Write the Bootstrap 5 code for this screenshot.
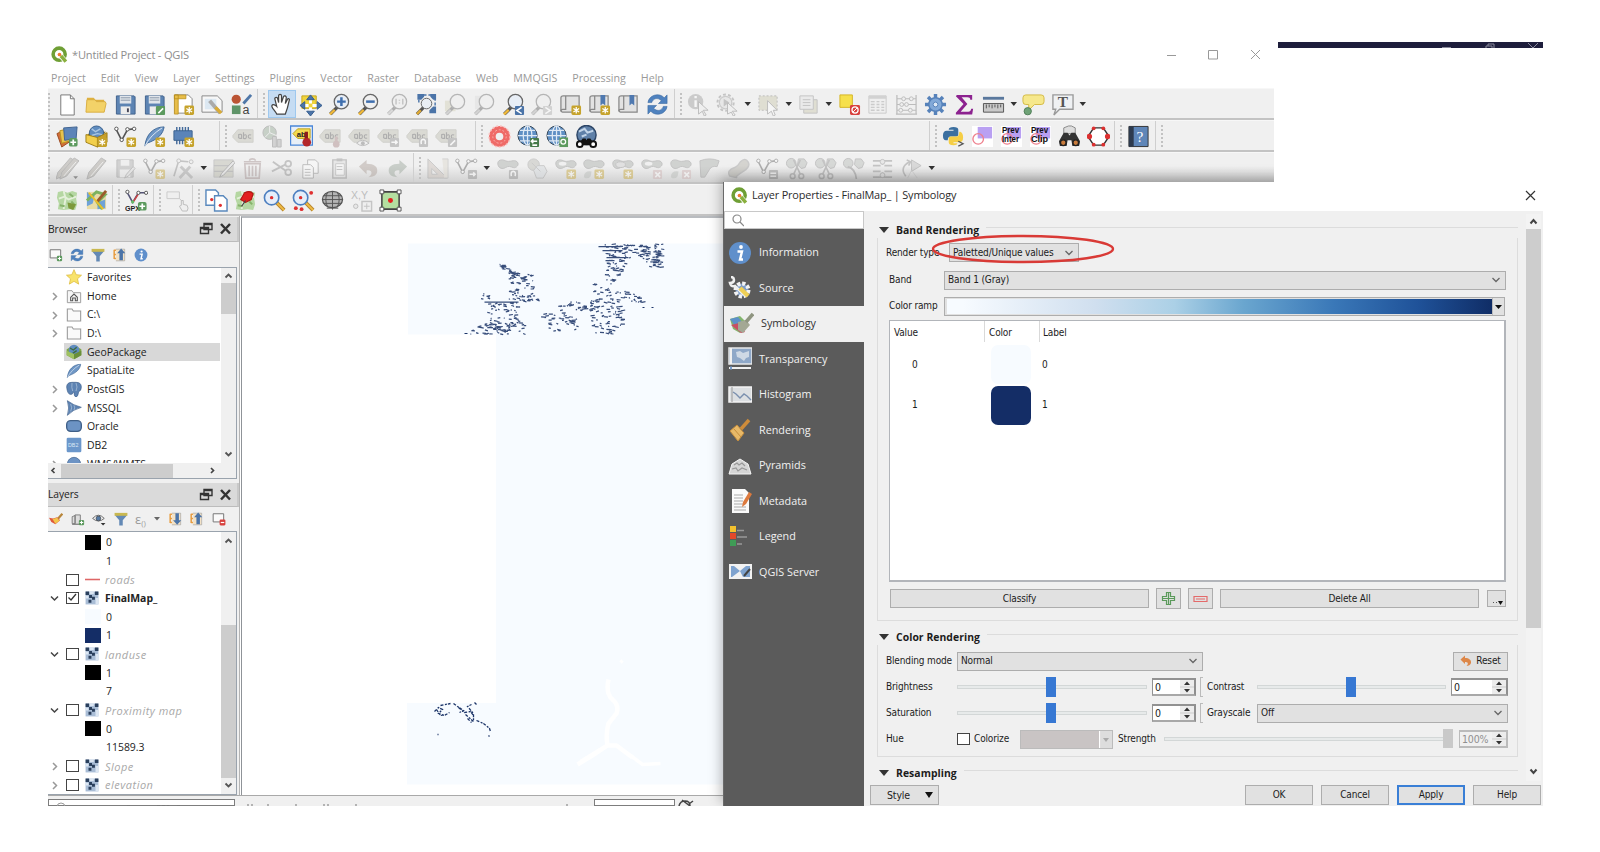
<!DOCTYPE html>
<html lang="en">
<head>
<meta charset="utf-8">
<title>QGIS - Layer Properties</title>
<link rel="stylesheet" href="https://cdn.jsdelivr.net/npm/bootstrap@5.3.0/dist/css/bootstrap.min.css">
<style>
body{background:#fff;font-family:"Open Sans","Noto Sans",sans-serif;font-size:11px;line-height:1;color:#222;overflow:hidden}
svg{display:block;flex:none}
.desk{width:1495px;height:764px;margin:42px 0 0 48px}
.mainwin{width:1226px;height:764px}
.wtitle{height:26px;color:#8e8e8e;padding:0 2px 1px 3px;font-size:11.1px;letter-spacing:-.2px}
.wmenu{height:21px;color:#9a9a9a;padding:2px 0 0 3px;gap:14.9px;font-size:10.7px}
.darkstrip{left:1230px;top:0;width:265px;height:6px;background:#1e1e3c}
.tbar{height:32px;background:#f0f0f0;border-top:1px solid #f7f7f7;border-bottom:2px solid #c3c3c3}
.tbar.fade-end{background:linear-gradient(#f0f0f0 45%,#d2d2d2)}
.tbar:last-child{background:#f0f0f0}
.tgroup{height:29px;border-right:1px solid #cfcfcf;flex:none;padding:1px 0 0 9.5px;position:relative}
.tgroup:last-child{border-right:0}
.tgroup:first-child{padding-left:5.5px}
.tgroup::before{content:"";position:absolute;left:5px;top:4px;bottom:3px;border-left:2px dotted #c2c2c2}
.tgroup:first-child::before{left:0}
.cell{width:28.9px;height:28px;flex:none}
.cell.on{background:#c5dcf3;border:1px solid #9ec8ee}
.arr{width:11.5px;flex:none}
.off{opacity:.42}
.dock{width:192px;background:#f0f0f0;border-right:1px solid #b4b4b4;padding-top:1px}
.dtitle{height:25px;background:#dadada;border-bottom:1px solid #bcbcbc;border-right:2px solid #c9c9c9;padding-right:4px;font-size:10.3px;letter-spacing:-.1px}
.dtools{height:25px}
.tree{background:#fff;border:1px solid #9aa3ad;border-left:0;margin-right:2px}
.trow{height:18.65px;font-size:10.45px;white-space:nowrap}
.trow.hl .tbody{background:#d8d8d8}
.tbody{height:18.65px;width:156px}
.tw{width:16px;flex:none}
.vsb{width:15px;background:#f0f0f0;flex:none}
.thumb{background:#cdcdcd}
.cb{width:13px;height:12px;border:1.4px solid #444;background:#fff;flex:none}
.sw{width:16px;height:15px;flex:none}
.ghost{color:#a8a8a8;font-style:italic;font-size:11px;letter-spacing:.5px}
.canvasbox{background:#fff;border-top:2px solid #b9bcc0;border-left:1px solid #8f9398;margin-left:1px}
.statusb{height:11px;flex:none;background:#f0f0f0;border-top:1px solid #a9a9a9;overflow:hidden}
.dlg{left:676px;top:140px;width:819px;height:624px;background:#f0f0f0;box-shadow:-1px 0 0 #6a6a6a,-3px -4px 12px rgba(0,0,0,.28);clip-path:polygon(-20px -20px,550px -20px,550px 0,819px 0,819px 624px,-20px 624px)}
.dlgtitle{height:29px;background:#fff;padding:0 6px 8px 7px;padding-bottom:2px;font-size:10.9px;color:#2b2b2b;letter-spacing:-.16px}
.side{width:140px;background:#5b5b5b}
.sfind{height:18px;background:#fff;border:1px solid #c8c8c8;padding-left:7px;margin-bottom:6px}
.sitem{height:35.5px;color:#f1f1f1;gap:7px;padding-left:4px;font-size:10.8px}
.sitem.sel{background:#f0f0f0;color:#333;padding-left:6px}
.cont{font-family:"DejaVu Sans Condensed","DejaVu Sans",sans-serif;font-size:10px;letter-spacing:-.15px;color:#1c1c1c}
.gbox{border:1px solid #dcdcdc;border-top:0;width:641px;margin-left:13px}
.ghead{height:17px;font:700 10.4px "Open Sans","Noto Sans",sans-serif;width:642px;letter-spacing:.05px}
.ghead::after{content:"";flex:1;height:1px;background:#dcdcdc;margin:0 0 4px 7px}
.ghead svg{margin:0 7px 0 3px}
.fld{height:19px;background:#e1e1e1;border:1px solid #adadad;padding:0 4px 0 3px;flex:none}
.pbtn{height:19px;background:#e1e1e1;border:1px solid #adadad;flex:none}
.cramp{background:linear-gradient(90deg,#f7fbff,#d0dfef 25%,#abd0e6 40%,#6aa6cf 53%,#3a78b8 70%,#1f5299 86%,#102d66);height:15px;width:529px}
.ptable{width:617px;height:262px;background:#fff;border:2px solid #b2b5ba;border-width:1px 2px 2px 1px;margin-left:11px}
.thd{height:23px}
.thd>div{border-right:1px solid #d9d9d9;height:21px;padding-left:4px}
.thd>div:last-child{border:0}
.swatch{width:40px;height:39px;border-radius:7px}
.frow{height:26px;padding-left:8px}
.lab{flex:none;white-space:nowrap}
.sl{height:20px;flex:none;padding:8px 0}
.sl>i{display:block;height:4px;border:1px solid #d3d7d7;background:#e7eaea}
.sl>b{position:absolute;top:0;width:10px;height:20px;background:#3778d3}
.spin{height:18px;background:#fff;border:1px solid #8f8f8f;border-width:2px 2px 2px 1px;border-color:#929292 #8f8f8f #a8a8a8 #929292;flex:none;padding-left:2px;font-size:10.5px}
.spin>span:last-child{width:14px;height:14px;background:#ececec}
.brk{width:3px;height:20px;border:1px solid #bbb;border-right:0;flex:none}
.csb{left:662px;top:3px;width:15px;height:567px;background:#f3f3f3}
.mark-ring{left:67px;top:22px}
.dis{color:#8f8f8f}
</style>
</head>
<body>
<div class="desk position-relative overflow-hidden">
 <div class="mainwin d-flex flex-column">
  <div class="wtitle d-flex align-items-center">
   <svg width="17" height="17" viewBox="0 0 24 24" data-i="q"></svg><span class="ms-1 flex-grow-1">*Untitled Project - QGIS</span>
   <svg width="110" height="12" viewBox="0 0 110 12" fill="none" stroke="#999" stroke-width="1"><path d="M5 7.5h9M46.500 2.500h9v8.500h-9zM89 2l9 9M98 2l-9 9"/></svg>
  </div>
  <div class="wmenu d-flex align-items-center" id="menu"></div>
  <div id="bars"></div>
  <div class="d-flex flex-grow-1">
   <div class="dock d-flex flex-column">
    <div class="dtitle d-flex align-items-center justify-content-between"><span>Browser</span><svg width="34" height="14" viewBox="0 0 34 14" data-i="dockb"></svg></div>
    <div class="dtools d-flex align-items-center ps-1" style="gap:7.200px;margin-left:-3px"><svg width="14" height="14" viewBox="0 0 24 24" data-i="addbox"></svg><svg width="14" height="14" viewBox="0 0 24 24" data-i="refresh"></svg><svg width="14" height="14" viewBox="0 0 24 24" data-i="filter"></svg><svg width="14" height="14" viewBox="0 0 24 24" data-i="collapse"></svg><svg width="14" height="14" viewBox="0 0 24 24" data-i="info"></svg></div>
    <div class="tree" style="height:212px">
     <div class="d-flex" style="height:195px">
      <div class="flex-grow-1 overflow-hidden" id="browser"></div>
      <div class="vsb"><svg width="15" height="15" viewBox="0 0 15 15" fill="none" stroke="#555" stroke-width="1.800"><path d="M4.500 9.500l3-3 3 3"/></svg><div class="thumb" style="height:31px"></div><svg width="15" height="15" viewBox="0 0 15 15" fill="none" stroke="#555" stroke-width="1.800" style="margin-top:133px"><path d="M4.500 5.500l3 3 3-3"/></svg></div>
     </div>
     <div class="d-flex align-items-center" style="height:15px;background:#f0f0f0"><svg width="13" height="15" viewBox="0 0 13 15" fill="none" stroke="#444" stroke-width="1.700"><path d="M6.500 5l-2.500 2.500 2.500 2.500"/></svg><div class="thumb" style="width:112px;height:14px"></div><svg class="ms-auto" width="31" height="15" viewBox="0 0 31 15" fill="none" stroke="#444" stroke-width="1.700"><path d="M6 5l2.500 2.500-2.500 2.500"/></svg></div>
    </div>
    <div class="dtitle d-flex align-items-center justify-content-between" style="margin-top:4px;height:24px"><span>Layers</span><svg width="34" height="14" viewBox="0 0 34 14" data-i="dockb"></svg></div>
    <div class="dtools d-flex align-items-center" style="gap:7.500px;padding-left:1px;height:24px"><svg width="14" height="14" viewBox="0 0 24 24" data-i="broom"></svg><svg width="14" height="14" viewBox="0 0 24 24" data-i="addgrp"></svg><svg width="14" height="14" viewBox="0 0 24 24" data-i="eye"></svg><svg width="14" height="14" viewBox="0 0 24 24" data-i="filter"></svg><span class="d-flex align-items-center" style="gap:1px"><span class="off" style="font-size:13px;width:17px">ε<sub style="font-size:8px">()</sub></span><svg width="8" height="6" viewBox="0 0 8 6"><path d="M1 1h6l-3 3.500z" fill="#666"/></svg></span><svg width="14" height="14" viewBox="0 0 24 24" data-i="expand"></svg><svg width="14" height="14" viewBox="0 0 24 24" data-i="collapse"></svg><svg width="14" height="14" viewBox="0 0 24 24" data-i="rmbox"></svg></div>
    <div class="tree d-flex flex-grow-1">
      <div class="flex-grow-1 overflow-hidden" id="layers" style="padding-top:1px"></div>
      <div class="vsb"><svg width="15" height="17" viewBox="0 0 15 15" fill="none" stroke="#555" stroke-width="1.800"><path d="M4.500 9.500l3-3 3 3"/></svg><div class="thumb" style="height:153px;margin-top:76px"></div><svg width="15" height="15" viewBox="0 0 15 15" fill="none" stroke="#555" stroke-width="1.800"><path d="M4.500 5.500l3 3 3-3"/></svg></div>
    </div>
   </div>
   <div class="canvasbox flex-grow-1"><svg id="map" width="483" height="573" viewBox="241.500 219.500 483 573"></svg></div>
  </div>
  <div class="statusb d-flex">
   <div style="width:187px;margin-top:3px;background:#fff;border:1px solid #7d7d7d"><svg width="187" height="8"><circle cx="12" cy="7" r="4" fill="none" stroke="#999"/><path d="M26 6.500h12M46 6.500h8M62 6.500h3M78 6h5M90 6.500h9M108 5.500h12M128 6h4" stroke="#777" stroke-width="1" stroke-dasharray="3 2"/></svg></div>
   <svg width="359" height="10"><path d="M12 9h8M32 9h4M60 9h3M88 9h8M120 9h3M331 9h2" stroke="#777" stroke-dasharray="2 2"/></svg>
   <div style="width:81px;margin-top:3px;background:#fff;border:1px solid #7d7d7d"></div>
   <svg width="50" height="10"><path d="M4 10q1-5 6-5t5 5M7 4l8 6M14 8l4-3" fill="none" stroke="#444" stroke-width="1.500"/></svg>
  </div>
 </div>
 <div class="darkstrip position-absolute"><svg width="265" height="6" fill="none" stroke="#8a8a9c"><path d="M164 5.500h9M208 6v-2h6v2M210 4v-2h6v4M250 1l5 5 5-5"/></svg></div>

 <div class="dlg position-absolute d-flex flex-column">
  <div class="dlgtitle d-flex align-items-center"><svg width="17" height="17" viewBox="0 0 24 24" data-i="q"></svg><span class="flex-grow-1" style="margin-left:4px">Layer Properties - FinalMap_ | Symbology</span><svg width="12" height="12" viewBox="0 0 12 12"><path d="M1 1l9 9M10 1l-9 9" stroke="#333" stroke-width="1.200"/></svg></div>
  <div class="d-flex flex-grow-1">
   <div class="side"><div class="sfind d-flex align-items-center"><svg width="12" height="13" viewBox="0 0 12 13" fill="none" stroke="#888" stroke-width="1.200"><circle cx="5" cy="5" r="4"/><path d="M8 8l4 4"/></svg></div><div id="side"></div></div>
   <div class="cont position-relative flex-grow-1">
    <div style="height:570px;overflow:hidden;padding-top:10px">
     <div class="ghead d-flex align-items-center" style="margin-left:12px"><svg width="10" height="8" viewBox="0 0 10 8"><path d="M0 1h10l-5 6z" fill="#333"/></svg>Band Rendering</div>
     <div class="gbox" style="height:383px">
      <div class="frow d-flex align-items-center" style="height:29px"><span class="lab" style="width:63px">Render type</span><div class="fld d-flex align-items-center justify-content-between" style="width:130px">Paletted/Unique values<svg width="10" height="8" viewBox="0 0 10 8" data-i="chev"></svg></div></div>
      <div class="frow d-flex align-items-center" style="padding-left:11px"><span class="lab" style="width:55px">Band</span><div class="fld d-flex align-items-center justify-content-between" style="width:562px">Band 1 (Gray)<svg width="10" height="8" viewBox="0 0 10 8" data-i="chev"></svg></div></div>
      <div class="frow d-flex align-items-center" style="padding-left:11px"><span class="lab" style="width:55px">Color ramp</span><div class="fld d-flex align-items-center" style="width:561px;padding:0 0 0 2px"><span style="width:16px;height:15px;background:#f7fbff"></span><div class="cramp"></div><svg class="ms-auto" width="12" height="17"><path d="M.5 0v17" stroke="#bbb"/><path d="M3 7h7l-3.500 4z" fill="#111"/></svg></div></div>
      <div class="ptable" style="margin-top:1px">
       <div class="thd d-flex"><div style="width:95px;padding-top:7px">Value</div><div style="width:55px;padding-top:7px">Color</div><div style="padding:7px 3px">Label</div></div>
       <div class="d-flex align-items-center" style="height:41px"><span style="width:101px;padding-left:22px">0</span><span class="swatch" style="background:#f7fbff"></span><span style="margin-left:11px">0</span></div>
       <div class="d-flex align-items-center" style="height:40px"><span style="width:101px;padding-left:22px">1</span><span class="swatch" style="background:#142d66"></span><span style="margin-left:11px">1</span></div>
      </div>
      <div class="d-flex align-items-center" style="margin:6px 0 0 12px;gap:7px"><div class="pbtn d-flex align-items-center justify-content-center" style="width:259px">Classify</div><div class="pbtn d-flex align-items-center justify-content-center" style="width:25px;height:21px"><svg width="15" height="15" viewBox="0 0 15 15" fill="none" stroke="#5b9a5b" stroke-width="1.200"><path d="M5.500 1.500h4v4h4v4h-4v4h-4v-4h-4v-4h4zM7.500 2v11M2 7.500h11"/></svg></div><div class="pbtn d-flex align-items-center justify-content-center" style="width:25px;height:21px"><svg width="15" height="8" viewBox="0 0 15 8" fill="none" stroke="#e46a6a" stroke-width="1.200"><path d="M1 1.500h13v5h-13zM3 4h9"/></svg></div><div class="pbtn d-flex align-items-center justify-content-center" style="width:259px">Delete All</div><div class="pbtn" style="width:19px;height:17px;margin-left:1px"><svg width="17" height="15"><path d="M5 11.500h1M8 11.500h1" stroke="#555"/><path d="M10 10h5l-2.500 4z" fill="#111"/></svg></div></div>
     </div>
     <div class="ghead d-flex align-items-center" style="margin:7px 0 0 12px"><svg width="10" height="8" viewBox="0 0 10 8"><path d="M0 1h10l-5 6z" fill="#333"/></svg>Color Rendering</div>
     <div class="gbox" style="height:112px;padding-top:3px">
      <div class="frow d-flex align-items-center"><span class="lab" style="width:71px">Blending mode</span><div class="fld d-flex align-items-center justify-content-between" style="width:246px">Normal<svg width="10" height="8" viewBox="0 0 10 8" data-i="chev"></svg></div><div class="pbtn d-flex align-items-center justify-content-center" style="width:55px;margin-left:250px;gap:4px"><svg width="12" height="12" viewBox="0 0 24 24"><path d="M1 9l9-8v5c8 0 13 4 12 10-1 4-5 6-9 6 3-2 5-9-3-8v4z" fill="#dd8748"/></svg>Reset</div></div>
      <div class="frow d-flex align-items-center"><span class="lab" style="width:71px">Brightness</span><div class="sl position-relative" style="width:190px"><i></i><b style="left:89px"></b></div><div class="spin d-flex align-items-center justify-content-between" style="width:44px;margin-left:5px">0<span data-spin></span></div><div class="brk" style="margin-left:4px"></div><span class="lab" style="margin-left:4px;width:50px">Contrast</span><div class="sl position-relative" style="width:189px"><i></i><b style="left:89px"></b></div><div class="spin d-flex align-items-center justify-content-between" style="width:57px;margin-left:5px">0<span data-spin></span></div></div>
      <div class="frow d-flex align-items-center"><span class="lab" style="width:71px">Saturation</span><div class="sl position-relative" style="width:190px"><i></i><b style="left:89px"></b></div><div class="spin d-flex align-items-center justify-content-between" style="width:44px;margin-left:5px">0<span data-spin></span></div><div class="brk" style="margin-left:4px"></div><span class="lab" style="margin-left:4px;width:50px">Grayscale</span><div class="fld d-flex align-items-center justify-content-between" style="width:251px">Off<svg width="10" height="8" viewBox="0 0 10 8" data-i="chev"></svg></div></div>
      <div class="frow d-flex align-items-center"><span class="lab" style="width:71px">Hue</span><span class="cb"></span><span class="lab" style="margin-left:4px;width:46px">Colorize</span><div class="fld d-flex justify-content-end p-0" style="width:93px;background:#c9c4c4;border-color:#bbb">
      <svg width="13" height="17"><path d="M0 0h1.500v17h-1.500z" fill="#fff"/><path d="M1.500 0h12v17h-12z" fill="#ddd"/><path d="M4 7h6l-3 4z" fill="#aaa"/></svg></div><span class="lab" style="margin-left:5px;width:46px">Strength</span><div class="sl position-relative" style="width:289px"><i></i><b style="left:279px;height:19px;background:#c9c9c9"></b></div><div class="spin dis d-flex align-items-center justify-content-between" style="width:49px;margin-left:6px;background:#f0f0f0;border-color:#bbb">100%<span data-spin></span></div></div>
     </div>
     <div class="ghead d-flex align-items-center" style="margin:7px 0 0 12px"><svg width="10" height="8" viewBox="0 0 10 8"><path d="M0 1h10l-5 6z" fill="#333"/></svg>Resampling</div>
     <div class="gbox" style="height:20px"></div>
    </div>
    <div class="d-flex" style="padding:4px 2px 0 6px;gap:8px"><div class="pbtn d-flex align-items-center justify-content-between px-3" style="width:69px;height:20px;font-size:10.500px;padding-right:5px!important">Style<svg width="8" height="6" viewBox="0 0 8 6"><path d="M0 0h8l-4 6z" fill="#111"/></svg></div><div class="pbtn ms-auto d-flex align-items-center justify-content-center" style="width:68px;height:20px">OK</div><div class="pbtn d-flex align-items-center justify-content-center" style="width:68px;height:20px">Cancel</div><div class="pbtn d-flex align-items-center justify-content-center" style="width:68px;height:20px;border:2px solid #3a7fd6">Apply</div><div class="pbtn d-flex align-items-center justify-content-center" style="width:68px;height:20px">Help</div></div>
    <div class="csb position-absolute"><svg width="15" height="15" viewBox="0 0 15 15" fill="none" stroke="#444" stroke-width="2"><path d="M4.500 9.500l3-3.500 3 3.500"/></svg><div class="thumb" style="height:399px"></div><svg width="15" height="15" viewBox="0 0 15 15" fill="none" stroke="#444" stroke-width="2" style="margin-top:136px"><path d="M4.500 5.500l3 3.500 3-3.500"/></svg></div>
    <svg class="mark-ring position-absolute" width="186" height="34" fill="none"><ellipse cx="92" cy="16" rx="90" ry="13" stroke="#d93a36" stroke-width="2.400"/></svg>
   </div>
  </div>
 </div>
</div>
<script src="https://cdn.jsdelivr.net/npm/bootstrap@5.3.0/dist/js/bootstrap.bundle.min.js"></script>
<script>
// Small building blocks shared by the icons; every icon is drawn on a 24 x 24 grid.
const star='<rect x="13" y="13" width="10" height="10" rx="1.500" fill="#c6a32c"/><path d="M18 14.500v7M15 16.200l6 3.600M21 16.200l-6 3.600" stroke="#fff" stroke-width="1.300"/>';
const plus='<rect x="13.500" y="13.500" width="9" height="9" rx="2" fill="#5c9a5e"/><path d="M18 15v6M15 18h6" stroke="#fff" stroke-width="1.800"/>';
const badge=(c,p)=>`<rect x="13.500" y="13.500" width="9.500" height="9.500" rx="1" fill="${c}"/><path d="${p}" stroke="#fff" stroke-width="1.600" fill="none"/>`;
const lens=(f,h,x='')=>`<path d="M9.500 15l-7 7" stroke="#555" stroke-width="3.600"/><path d="M7 17.500l-5 4.800" stroke="${h}" stroke-width="2.500"/><circle cx="14" cy="9" r="7.500" fill="${f}" stroke="#666" stroke-width="1.300"/>${x}`;
const tag='<path d="M1 11l5-6h16v13h-16l-5-5z" fill="#bdbcae" stroke="#a5a59b"/><path d="M7 10q3-1 3 1v3q-4 0-3-2zM12 7.500v6.500q3 1 3-2t-3-1M20 10.500q-3-1-3 1.500t3 1.500" fill="none" stroke="#555" stroke-width="1.200"/>';
const vee='<path d="M2 4l6 12 6-11 6-1" fill="none" stroke="#555" stroke-width="1.700"/><circle cx="2.500" cy="4" r="1.800" fill="#fff" stroke="#555"/><circle cx="8" cy="15.500" r="1.800" fill="#fff" stroke="#555"/><circle cx="14" cy="4.500" r="1.800" fill="#fff" stroke="#555"/><circle cx="21" cy="4" r="1.800" fill="#fff" stroke="#555"/>';
const blob='<path d="M2 8c-1-5 4-6 8-4s9-2 12 1-1 7-4 6-5-2-8 0-7 1-8-3z" fill="#a6aaa6" stroke="#888"/>';
const globe='<circle cx="11" cy="11" r="10" fill="#5f8fc4" stroke="#345"/><ellipse cx="11" cy="11" rx="4.500" ry="10" fill="none" stroke="#dfe9f5" stroke-width="1.300"/><path d="M1 11h20M3 5.500h16M3 16.500h16M11 1v20" stroke="#dfe9f5" stroke-width="1.300"/>';
const page='<path d="M5 2h10l4 4v17h-14z" fill="#fff" stroke="#777"/><path d="M15 2v4h4" fill="none" stroke="#777"/>';
const floppy='<path d="M2.500 3h18.500l1 1v18h-19.500z" fill="#5d84b3" stroke="#41618c"/><path d="M6 3h12v8h-12z" fill="#dfe4ea"/><path d="M7 5h10M7 7.500h10" stroke="#8a97a8"/><path d="M7 14h10v8h-10z" fill="#ececec"/><path d="M13.500 16h2v4h-2z" fill="#445"/>';
const book='<path d="M5 3h16v17h-16q-3 0-3-2v-13q0-2 2.500-2z" fill="#e2e2e2" stroke="#888" stroke-width="1.300"/><path d="M7 3v14h-3q-2 0-2 2" fill="none" stroke="#888" stroke-width="1.300"/>';
const pencil='<path d="M17 1l5 3-13 16-7 3 2-7z" fill="#a09c94" stroke="#777"/><path d="M19 5l-13 15" stroke="#eee"/>';
const sciss='<path d="M9 3l7 15M16 3l-7 15" stroke="#888" stroke-width="1.800"/><circle cx="8" cy="20" r="2.500" fill="none" stroke="#888" stroke-width="1.600"/><circle cx="17" cy="20" r="2.500" fill="none" stroke="#888" stroke-width="1.600"/>';
const twin='<circle cx="6.500" cy="6.500" r="5" fill="#b4b8b4" stroke="#888"/><path d="M14 2h6l3 4-2 5-4 1-4-4z" fill="#b4b8b4" stroke="#888"/>';
const land='<path d="M2 3l5-1 5 2 5-2 5 2-1 6 1 6-2 6-6-1-6 1-6-1 1-6-2-6z" fill="#b5d7a2"/><path d="M3 10l6-2 4 3 8-3M8 2l2 8-2 11" stroke="#e4f0da" stroke-width="2" fill="none"/><path d="M14 5l4 3M4 17l5 1M16 13l3 3" stroke="#86b36b" stroke-width="2"/>';
const mag2='<path d="M14 14l8 8" stroke="#b8862d" stroke-width="4"/><path d="M14 14l8 8" stroke="#f1bd45" stroke-width="2"/><circle cx="9" cy="9" r="7.500" fill="#e5eefa" stroke="#4d7fc0" stroke-width="1.700"/><circle cx="9" cy="9" r="1.800" fill="#e03030"/>';
const prev='<path d="M1 1h22v22h-22z" fill="#fff"/><path d="M7 2h15v12h-15z" fill="#b9a0f2"/><circle cx="7.500" cy="14.500" r="5.500" fill="none" stroke="#ee7f8c" stroke-width="1.400"/>';
const word=(a,b)=>`<g font-family="Liberation Sans" font-weight="700" font-size="9" fill="#111"><text x="2" y="8.500" textLength="18" lengthAdjust="spacingAndGlyphs">${a}</text><text x="2" y="17.500" textLength="18" lengthAdjust="spacingAndGlyphs">${b}</text></g>`;
const tree3='<path d="M2 3v16M2 4h4M2 11h4M2 18h4" stroke="#e79a3c" stroke-width="2.500" fill="none"/><path d="M5 2h15v20h-15" fill="#f3e2c6" stroke="#999"/>';
const I={
q:'<circle cx="11.500" cy="11.500" r="8.500" fill="none" stroke="#6f9f35" stroke-width="5"/><path d="M11 11l9 10" stroke="#fff" stroke-width="7"/><path d="M14 14l7 8" stroke="#8ab03e" stroke-width="5"/><circle cx="12" cy="12" r="2.600" fill="#ee7b30"/>',
chev:'<path d="M1.500 2l3.500 3.500 3.500-3.500" fill="none" stroke="#666" stroke-width="1.300"/>',
dockb:'<path d="M5 1.500h8v6h-8zM1.500 5.500h8v6h-8z" fill="#dadada" stroke="#333" stroke-width="1.400"/><path d="M5 2.200h8M1.500 6.200h8" stroke="#333" stroke-width="2"/><path d="M22 2l9 9.500M31 2l-9 9.500" stroke="#333" stroke-width="2.500"/>',
new:page,
open:'<path d="M2 5h7l2 2h9v4h-18z" fill="#dfb13f"/><path d="M1 20l1-13h8l2 2h9l1 2-2 9z" fill="#f3d268" stroke="#d8ae42"/>',
save:floppy,saveas:floppy+badge('#5c9a5e','M16 21l5-5'),
layout:'<path d="M3 2h14l4 4v15h-18z" fill="#fff" stroke="#888"/><path d="M2.500 2h4v20h-4zM2.500 2h12v4h-12z" fill="#e7bd49" stroke="#b98d1c" stroke-width=".8"/>'+star,
laymgr:'<path d="M1 3h16l5 5v12h-21z" fill="#f7f7f7" stroke="#888"/><path d="M4 6h12v11h-12z" fill="#dce8f2"/><path d="M9 8l11 13" stroke="#aaa" stroke-width="4"/><path d="M15 15l6 6" stroke="#d9ab37" stroke-width="3.500"/>',
style:'<circle cx="6.500" cy="6.500" r="4.800" fill="#bb5434"/><path d="M2 13h9v9h-9z" fill="#5f9468"/><path d="M14 11l8-9" stroke="#4f77a8" stroke-width="3"/><text x="13" y="22" font-family="Liberation Sans" font-size="13" fill="#444">a</text>',
hand:'<path d="M7 22c-2-4-6-7-5-9s4 0 5 1l-2-8c0-2 3-2 3 0l1 4v-7c0-2 3-2 3 0v7l2-6c1-2 3-1 3 1l-1 6 2-4c1-2 3-1 2 1-1 5-2 9-4 14z" fill="#fff" stroke="#444" stroke-width="1.300"/>',
pansel:'<path d="M3 3h15v13h-15z" fill="#f0d43c" stroke="#c5a61f"/><path d="M12 4v18M3 13h18" stroke="#fff" stroke-width="3"/><path d="M12 2l4 5h-8zM12 24l4-5h-8zM1 13l5-4v8zM24 13l-5-4v8z" fill="#4b74a8" stroke="#345c8e"/><path d="M10 11h4v4h-4z" fill="#f0d43c"/>',
zin:lens('#e8eef6','#f0b93a','<path d="M14 4.500v9M9.500 9h9" stroke="#3f6fae" stroke-width="2.600"/>'),
zout:lens('#f0f0f0','#f0b93a','<path d="M9.500 9h9" stroke="#3f6fae" stroke-width="2.600"/>'),
z11:lens('#eee','#bbb','<path d="M10.500 6v6M17.500 6v6M14 7v1M14 10v1" stroke="#888" stroke-width="1.500"/>'),
zfull:'<path d="M4 2h17v17h-6M4 2v10" stroke="#4b74a8" stroke-width="1.500" stroke-dasharray="3 2" fill="none"/><path d="M9 15l-7 7" stroke="#555" stroke-width="3.400"/><path d="M6 18l-4 4" stroke="#e0aa33" stroke-width="2.500"/><circle cx="12" cy="11" r="5.500" fill="#e9eef4" stroke="#666"/><path d="M2.500 1h7v3l-3 3h-4zM22 1h-6v3l3 3h3zM22 21v-7h-3l-4 4v3z" fill="#4b74a8"/>',
zsel:'<path d="M1 8h11v11h-11z" fill="#cfcdb4"/>'+lens('#eee','#aaa'),
zlay:'<path d="M2 3h12v14h-12z" fill="#ddd"/>'+lens('#eee','#aaa'),
zlast:lens('#e8eef6','#f0b93a')+badge('#4b74a8','M20.500 15l-5 3.300 5 3.300'),
znext:lens('#eee','#aaa')+badge('#aaa','M16 15l5 3.300-5 3.300'),
book1:book+star,book2:book+'<path d="M13 2h5v11l-2.500-2-2.500 2z" fill="#4f79b0"/>'+star,book3:book+'<path d="M13 2h5v11l-2.500-2-2.500 2z" fill="#4f79b0"/>',
refresh:'<path d="M2 10c1-8 12-11 17-5l3-3v9h-9l3-3c-4-4-9-2-10 2zM22 14c-1 8-12 11-17 5l-3 3v-9h9l-3 3c4 4 9 2 10-2z" fill="#4f82bf" stroke="#38679f" stroke-width=".6"/>',
ident:'<circle cx="9" cy="9" r="8" fill="#999"/><path d="M9 3v2.500M9 7.500v7" stroke="#fff" stroke-width="2.500"/><path d="M12 9l10 9-5 0 3 5-2 1-2-5-4 3z" fill="#eee" stroke="#777"/>',
act:'<circle cx="10" cy="10" r="8.500" fill="none" stroke="#888" stroke-width="2" stroke-dasharray="3 2.300"/><circle cx="10" cy="10" r="6.500" fill="#ddd" stroke="#999" stroke-width="1.300"/><path d="M8 6l6 4-6 4z" fill="#888"/><path d="M12 10l10 9h-5l3 4-2 1-2-4-4 2z" fill="#eee" stroke="#777"/>',
selr:'<path d="M2 3h19v15h-19z" fill="#c9c6ab" stroke="#777" stroke-dasharray="2 2"/><path d="M11 8l10 10h-4l2 5-2 1-2-5-4 3z" fill="#fff" stroke="#777"/>',
form:'<path d="M7 7h14v14h-14z" fill="#c9c6ab" stroke="#888"/><path d="M3 3h14v14h-14z" fill="#e3e3e3" stroke="#888"/><path d="M6 7h8M6 10h8M6 13h8" stroke="#888"/>',
desel:'<path d="M2 2h13v13h-13z" fill="#f6e04c" stroke="#d4b528"/><rect x="12.500" y="12.500" width="10.500" height="10.500" rx="1.500" fill="#d8423f"/><circle cx="17.800" cy="17.800" r="3.200" fill="none" stroke="#fff" stroke-width="1.300"/><path d="M15.500 20l4.500-4.500" stroke="#fff"/>',
table:'<path d="M3 3h18v18h-18z" fill="#eee" stroke="#999"/><path d="M3 4.500h18" stroke="#aaa" stroke-width="3"/><path d="M5 9h4M11 9h3M16 9h3M5 12h4M11 12h3M16 12h3M5 15h4M11 15h3M16 15h3M5 18h4M11 18h3M16 18h3" stroke="#999" stroke-width="1.400"/>',
abac:'<path d="M2 2v20M22 2v20M1 22h22M2 6h20M2 12h20M2 18h20" stroke="#777" stroke-width="1.300"/><g fill="#eee" stroke="#777"><circle cx="9" cy="6" r="2"/><circle cx="17" cy="6" r="2"/><circle cx="7" cy="12" r="2"/><circle cx="12" cy="12" r="2"/><circle cx="6" cy="18" r="2"/><circle cx="16" cy="18" r="2"/></g>',
gear:'<path d="M12 1v22M1 12h22M4.200 4.200l15.600 15.600M19.800 4.200l-15.600 15.600" stroke="#5682ba" stroke-width="3.600"/><circle cx="12" cy="12" r="7" fill="#82a9d8" stroke="#5682ba" stroke-width="1.500"/><circle cx="12" cy="12" r="2.500" fill="#dce8f5" stroke="#5682ba"/>',
sum:'<path d="M4 2h16v5h-2q0-2.500-3-2.500h-6l6 7-7 8h8q2.500 0 3-3h2l-1 6h-17v-2l8-9-8-8z" fill="#8c228f"/>',
meas:'<path d="M1 5.500h22" stroke="#5a789d" stroke-width="3"/><path d="M1.500 11h21v9h-21z" fill="#c9c9c9" stroke="#555"/><path d="M4.500 12v4M7.500 12v3M10.500 12v4M13.500 12v3M16.500 12v4M19.500 12v3" stroke="#555"/>',
tip:'<path d="M4 2h16q3 0 3 3v4q0 3-3 3h-7l-6 6v-6h-3q-3 0-3-3v-4q0-3 3-3z" fill="#f6e88c" stroke="#d3b944"/><circle cx="6" cy="19" r="3.800" fill="#6fa377" stroke="#4f7d57"/>',
text:'<path d="M2 2h21v15h-14l-6 6 2-6h-3z" fill="#eff1f3" stroke="#999" stroke-width="1.400"/><text x="7" y="14.500" font-family="Liberation Serif" font-size="16" font-weight="700" fill="#555">T</text>',
dsm:'<path d="M1 9l8-4 6 12-9 6z" fill="#d26e3a" stroke="#9c4a20"/><path d="M4 6l12-3 1 13-11 3z" fill="#e9c34d" stroke="#b99320"/><path d="M8 3l14-1-1 12-12 2z" fill="#5c84b8" stroke="#3f6290"/>'+plus,
gpk:'<path d="M1 11l6-4h15l-5 5z" fill="#9a7b1d"/><circle cx="12" cy="8.500" r="7.500" fill="#5f8cbf" stroke="#3c628e"/><path d="M7 4l4 3 5-3M7 11l6-2 5 1" stroke="#a9c6e3" fill="none" stroke-width="1.500"/><path d="M1 10l12 3v10l-12-5z" fill="#f2cf4c" stroke="#a07e17"/><path d="M13 13l10-5v10l-10 5z" fill="#c79f2a" stroke="#a07e17"/>'+star,
vnew:vee+star,
feather:'<path d="M2 22c1-12 9-20 20-20-1 7-6 13-18 17z" fill="#6f97c6" stroke="#3f6797"/><path d="M2 22c4-8 10-14 18-19" stroke="#dfe9f5" fill="none"/>',
feanew:'<path d="M2 22c1-12 9-20 20-20-1 7-6 13-18 17z" fill="#6f97c6" stroke="#3f6797"/><path d="M2 22c4-8 10-14 18-19" stroke="#dfe9f5" fill="none"/>'+star,
chip:'<path d="M5 2v18M8 2v18M11 2v18M14 2v18M17 2v18" stroke="#446b9c" stroke-width="1.500"/><path d="M2 6h19v10h-19z" fill="#5b84b8" stroke="#3c628e"/>'+star,
lab:tag,
diag:'<circle cx="9" cy="8" r="7" fill="#8fa58f" stroke="#777"/><path d="M9 8v-7M9 8l7 3M9 8l-5 5" stroke="#eee"/><path d="M12 12h4v11h-4zM17 15h4v8h-4z" fill="#aaa" stroke="#777"/>',
labp:'<path d="M.5 1h23v20h-23z" fill="#e8eff7" stroke="#4a86d8" stroke-width="1.500"/><path d="M3 9l5-5h13v10h-13z" fill="#f4dc51" stroke="#bba11f"/><text x="7" y="12" font-size="8" font-weight="700" font-family="Liberation Sans" fill="#222">ab</text><path d="M17 7v9" stroke="#8c1c1c" stroke-width="3.500"/><circle cx="17.500" cy="18" r="4.500" fill="#b3262a"/>',
lpin:tag+'<path d="M18 12v7" stroke="#a58080" stroke-width="3"/><circle cx="18" cy="20" r="3.500" fill="#a58080"/>',
leye:tag+'<path d="M9 19q6-6 13 0q-7 5-13 0z" fill="#eee" stroke="#777"/><circle cx="15.500" cy="19" r="2" fill="#777"/>',
lmov:tag+badge('#888','M15 18h6M19 16l2 2-2 2'),lrot:tag+badge('#888','M20 20q1-5-2-5t-2 5'),ledt:tag+badge('#888','M16 21l5-5'),
ring:'<circle cx="12" cy="12" r="7.500" fill="none" stroke="#ef6a67" stroke-width="7"/><circle cx="12" cy="12" r="11" fill="none" stroke="#f9c2c0" stroke-width="1.500" stroke-dasharray="2 2"/><circle cx="12" cy="12" r="7" fill="none" stroke="#f8b3b0" stroke-width="1" stroke-dasharray="2 2"/>',
glo1:globe+badge('#467a4a','M15 17h6M17 15l-2 2 2 2M16 21h5'),glo2:globe+'<rect x="14" y="13" width="9" height="10" fill="#5c9a5e"/><circle cx="18" cy="17.500" r="2.500" fill="none" stroke="#fff" stroke-width="1.300"/>',
glob:'<circle cx="12" cy="10.500" r="10" fill="#5f80a8" stroke="#2d4566" stroke-width="1.500"/><path d="M4 7l6-3 3 4 6-2M7 12l5-2" stroke="#c2d4e8" stroke-width="2" fill="none"/><path d="M3 21l5-7h3l1 2 1-2h3l5 7" fill="#111"/><circle cx="5" cy="20" r="3" fill="#fff" stroke="#111" stroke-width="2"/><circle cx="19" cy="20" r="3" fill="#fff" stroke="#111" stroke-width="2"/>',
pens:'<g transform="translate(-2 0)">'+pencil+'</g><g transform="translate(2 0)">'+pencil+'</g><path d="M18 20h5l-2.500 3z" fill="#222"/>',pen:pencil,
sav2:'<path d="M3 3h17v18h-17z" fill="#aaa" stroke="#888"/><path d="M7 3h9v6h-9zM6 13h11v8h-11z" fill="#eee"/><path d="M20 10l-7 8-2 4 4-2 7-8z" fill="#ddd" stroke="#888"/>',
tools:'<path d="M2 20l5-16 10 1" fill="none" stroke="#888" stroke-width="1.700"/><circle cx="7" cy="4" r="2" fill="#eee" stroke="#888"/><circle cx="20" cy="5" r="2" fill="#eee" stroke="#888"/><path d="M9 10l12 12M19 10l-11 12" stroke="#999" stroke-width="3"/>',
medit:'<path d="M2 3h20v18h-20z" fill="#b9b9a9" stroke="#999"/><path d="M2 9h20M2 15h20" stroke="#888" stroke-width="1.500"/><path d="M22 4l-12 13-2 4 4-2 12-13z" fill="#ddd" stroke="#666"/>',
trash:'<path d="M4 7h16l-1 15h-14zM3 5h18M9 4q0-2 3-2t3 2M8.500 9v11M12 9v11M15.500 9v11" fill="none" stroke="#a08c8c" stroke-width="1.700"/>',
cut:'<path d="M3 5l13 9M2 15l14-7" stroke="#888" stroke-width="2"/><circle cx="19" cy="16" r="3" fill="none" stroke="#888" stroke-width="1.800"/><circle cx="19" cy="7" r="3" fill="none" stroke="#888" stroke-width="1.800"/>',
copy:'<path d="M9 3h8l3 3v11h-11z" fill="#fff" stroke="#777"/><path d="M4 8h8l3 3v11h-11z" fill="#fff" stroke="#777"/><path d="M6 13h6M6 16h6M6 19h6" stroke="#888"/>',
paste:'<path d="M5 3h14v19h-14z" fill="#ddd" stroke="#888" stroke-width="1.500"/><path d="M8 7h9v12h-9z" fill="#fff" stroke="#999"/><path d="M9 1.500h6v3h-6z" fill="#888"/><path d="M9 10h6M9 13h6" stroke="#888"/>',
undo:'<path d="M2 10l8-7v4c8 0 12 3 11 9-1 4-5 5-9 5 4-2 5-8-2-7v4z" fill="#a89a92"/>',redo:'<path d="M22 10l-8-7v4c-8 0-12 3-11 9 1 4 5 5 9 5-4-2-5-8 2-7v4z" fill="#94a094"/>',
tri:'<path d="M2 2v20h20z" fill="#c8bdb5" stroke="#999"/><path d="M6 12v6h6z" fill="#eee" stroke="#999"/><path d="M17 2h6v20h-4" fill="#ddd8cc" stroke="#aaa"/>',
v1:vee+badge('#888','M15 18h6M19 16l2 2-2 2'),v2:vee+badge('#888','M15 17h6M21 20h-6'),
b1:blob+badge('#888','M20 20q1-5-2-5t-2 5'),b2:'<circle cx="9" cy="8" r="6" fill="#b9b9b0" stroke="#999"/><path d="M9 14l4-5h7l3 6-4 7h-7z" fill="#d3d8dc" stroke="#999"/><path d="M7 6l9 9" stroke="#999"/>',
b3:blob+'<ellipse cx="9" cy="7" rx="4" ry="2" fill="#f0f0f0"/>'+star,b4:blob+'<path d="M2 21q0-7 8-6l-1 5q-3 4-7 1z" fill="#b4b8b4"/>'+star,b5:blob+'<ellipse cx="10" cy="8" rx="5" ry="3" fill="#ccc" stroke="#888"/>'+star,
b6:blob+'<ellipse cx="9" cy="7" rx="4" ry="2" fill="#f0f0f0"/>'+badge('#cdb0b0','M16 16l5 5M21 16l-5 5'),b7:blob+'<path d="M2 21q0-7 8-6l-1 5q-3 4-7 1z" fill="#b4b8b4"/>'+badge('#cdb0b0','M16 16l5 5M21 16l-5 5'),
b8:'<path d="M2 4q10-4 20 0l-2 6q-6-1-8 3l-5 8h-4z" fill="#a8aca8" stroke="#888"/>',b9:'<path d="M3 20q-4-6 5-9 4-2 6-6 5-5 8 0t-5 10-7 6-7-1z" fill="#b0aea5" stroke="#999" stroke-width="1.500"/>',
s1:twin+sciss,s2:twin+sciss,s3:twin+'<path d="M6 10q8 2 9 13" stroke="#888" fill="none" stroke-width="1.800"/>',
mrg:'<path d="M2 4h20M2 9h8M14 9h8M2 15h8M14 15h8M2 21h20M12 3v5M12 21v-5" stroke="#888" stroke-width="1.700"/><circle cx="12" cy="5" r="2.500" fill="#ddd" stroke="#888"/><circle cx="12" cy="19" r="2.500" fill="#ddd" stroke="#888"/>',
rot:'<path d="M6 20q-7-9 4-15M7 3l4 2-2 4" fill="none" stroke="#888" stroke-width="1.700"/><path d="M12 3l10 6-10 6z" fill="#bbb" stroke="#888"/><path d="M12 14l-4 8M13 15l5 7" stroke="#bbb"/>',
g1:land+'<path d="M12 14l9 2-3 6-5-2z" fill="#7d9a3c"/>',g2:'<path d="M2 3h20v18h-20z" fill="#e9dca6"/><path d="M2 3l8 4-2 8-6 3zM13 14l8-3v9l-8 1z" fill="#6fa2d8"/><path d="M2 12l10-9 9 3-8 8 5 7" stroke="#7db25f" stroke-width="3" fill="none"/><path d="M22 2l-10 12" stroke="#9b5b2b" stroke-width="3"/><path d="M4 4l15 17" stroke="#e9c02c" stroke-width="2"/>',
gpx:'<path d="M2 3l6 11 6-10h8" fill="none" stroke="#557" stroke-width="1.600"/><path d="M9 13l5-8" stroke="#c44" stroke-width="1.600"/><circle cx="2.500" cy="3" r="1.700" fill="#fff" stroke="#555"/><circle cx="14" cy="4" r="1.700" fill="#fff" stroke="#555"/><circle cx="22" cy="4" r="1.700" fill="#fff" stroke="#555"/><circle cx="8" cy="13.500" r="1.700" fill="#6b6"/><text x="0" y="23" font-family="Liberation Sans" font-weight="700" font-size="7.500" fill="#222">GPX</text>'+plus,
cur:'<path d="M1 3h13v7h-13z" fill="#eee" stroke="#999"/><path d="M14 10l4 4" stroke="#888"/><path d="M17 23l-3-5 2-1v-5h2v4l4 1 1 3-1 3z" fill="#eee" stroke="#777"/>',
cpc:'<path d="M1 1h10l3 3v13h-13z" fill="#fff" stroke="#5a89bd" stroke-width="1.500"/><path d="M10 7h9l4 4v12h-13z" fill="#fff" stroke="#5a89bd" stroke-width="1.500"/><circle cx="7" cy="11" r="1.700" fill="#e03030"/><circle cx="16" cy="17" r="1.700" fill="#e03030"/>',
pinm:land+'<path d="M11 4q6-3 9 1l-2 6-6 3-5-3z" fill="#e3221f" stroke="#b31713" stroke-width="1.200"/><path d="M8 18l4-6" stroke="#444" stroke-width="1.300"/>',
m1:mag2,m2:mag2+'<circle cx="20" cy="4" r="2" fill="#e03030"/><circle cx="4" cy="20" r="2" fill="#e03030"/><circle cx="10" cy="21" r="2" fill="#e03030"/>',
earth:'<ellipse cx="12" cy="11" rx="10.500" ry="8.500" fill="#b4b4b4" stroke="#555" stroke-width="1.300"/><path d="M1.500 11h21M3 7h18M3 15h18M12 2.500v19M7 3q-4 8 0 16M17 3q4 8 0 16M6 20h12" stroke="#555" fill="none"/>',
xy:'<text x="1" y="10" font-size="11" font-family="Liberation Sans" fill="#777">X,Y</text><circle cx="6" cy="18" r="2.300" fill="#ddd" stroke="#777"/><rect x="12.500" y="13" width="10" height="10" fill="#eee" stroke="#888" stroke-width="1.500"/><path d="M17.500 15v6M14.500 18h6" stroke="#888"/>',
ext:'<path d="M3 3h18v18h-18z" fill="#b4dfa0" stroke="#444" stroke-width="1.600"/><g fill="#fff" stroke="#555"><path d="M1 1h4v4h-4zM19 1h4v4h-4zM1 19h4v4h-4zM19 19h4v4h-4z"/></g><circle cx="12" cy="12" r="2.600" fill="#e3221f"/>',
py:'<path d="M12 2q5 0 5 3v5q0 2-2 2h-6q-3 0-3 4h-2q-3 0-3-5t4-5h7v-1h-5q0-3 5-3z" fill="#3b6f9f"/><path d="M12 21q-5 0-5-3v-4q0-2 2-2h6q3 0 3-5h1q3 1 3 6t-4 5h-6v1h4q0 2-4 2z" fill="#f5ce45"/><path d="M17 17l5 2.500-5 2.500" fill="none" stroke="#555" stroke-width="1.300"/>',
p1:prev,p2:prev+word('Prev','Inter'),p3:prev+word('Prev','Clip'),
bin:'<path d="M6 3l5-2h3l4 2v6h-12z" fill="#ddd" stroke="#888"/><path d="M1 17l5-9h4l2 3 2-3h4l5 9-1 5h-7l-1-6h-4l-1 6h-7z" fill="#333"/><circle cx="5.500" cy="18.500" r="3" fill="#c97b3b" stroke="#222" stroke-width="1.500"/><circle cx="18.500" cy="18.500" r="3" fill="#c97b3b" stroke="#222" stroke-width="1.500"/>',
hex:'<path d="M7 3h10l6 9-6 9h-10l-6-9z" fill="#fff" stroke="#333" stroke-width="1.500"/><g fill="#dc3030"><circle cx="7" cy="3.500" r="2"/><circle cx="17" cy="3.500" r="2"/><circle cx="2.500" cy="12" r="2.800"/><circle cx="21.500" cy="12" r="2.800"/><circle cx="7" cy="20.500" r="2"/><circle cx="17" cy="20.500" r="2"/></g>',
help:'<path d="M2 1.500h20v21h-20z" fill="#5f86b8" stroke="#333"/><path d="M2 1.500h5v21h-5z" fill="#2d3a4d"/><text x="10" y="17.500" font-size="16" font-family="Liberation Serif" fill="#fff">?</text>',
addbox:'<path d="M2 3h18v14h-18z" fill="#fafafa" stroke="#777" stroke-width="1.700"/>'+plus,rmbox:'<path d="M2 3h18v14h-18z" fill="#fafafa" stroke="#777" stroke-width="1.700"/><rect x="13" y="13" width="10" height="10" rx="2" fill="#d8423f"/><path d="M15 18h6" stroke="#fff" stroke-width="2"/>',
filter:'<path d="M2 2h20v4l-7 8v9h-6v-9l-7-8z" fill="#6389b5"/><path d="M1 1.500h22v5h-22z" fill="#c9b850"/>',
collapse:tree3+'<path d="M14 1l7 8h-4v12h-6v-12h-4z" fill="#4b74a8"/>',expand:tree3+'<path d="M14 22l7-8h-4v-12h-6v12h-4z" fill="#4b74a8"/>',
info:'<circle cx="12" cy="12" r="11" fill="#5f8fcb"/><circle cx="13" cy="6" r="1.900" fill="#fff"/><path d="M9.500 10.500h4.500l-2 8h3" fill="none" stroke="#fff" stroke-width="2.400"/>',
addgrp:'<path d="M2 20v-12l5-2v14zM7 20v-15h9v15" fill="#ddd" stroke="#777" stroke-width="1.500"/><path d="M2 21h14" stroke="#777" stroke-width="2"/>'+plus,
eye:'<path d="M1 11q10-11 20 0q-10 9-20 0z" fill="#eee" stroke="#666" stroke-width="1.600"/><circle cx="11" cy="11" r="4" fill="#557aa5" stroke="#333"/><path d="M15 19h8l-4 4z" fill="#333"/>',
broom:'<path d="M23 3l-8 9" stroke="#b8863b" stroke-width="4"/><path d="M0 10l7 1 7-2 5 5-8 7-7-4z" fill="#e0593d"/><path d="M6 12l8-2 4 5-7 5z" fill="#f2c64a"/>',
fav:'<path d="M12 1l3.300 7.500 8 .8-6 5.400 1.700 8-7-4.200-7 4.200 1.700-8-6-5.400 8-.8z" fill="#f8e36b" stroke="#d9b32e"/>',
home:'<path d="M2 4h7l2 3h11v15h-20z" fill="#f6f6f6" stroke="#999" stroke-width="1.400"/><path d="M7 14l5-5 5 5v5h-3v-4h-4v4h-3z" fill="none" stroke="#555" stroke-width="1.600"/>',
dir:'<path d="M2 3h7l2 3h11v15h-20z" fill="#fafafa" stroke="#999" stroke-width="1.600"/>',
geo:'<path d="M1 8l11-6 11 6v9l-11 6-11-6z" fill="#7fa648"/><circle cx="12" cy="9" r="8" fill="#5f8cbf"/><path d="M6 6l5 3 5-4M10 14l6-4" stroke="#3e6a3c" stroke-width="2" fill="none"/><path d="M1 10l11 5v8l-11-6z" fill="#9fc162"/><path d="M23 10l-11 5v8l11-6z" fill="#6a8f3a"/>',
pg:'<path d="M1 9q0-7 8-7h6q8 0 8 7 0 6-4 7-1 8-4 8t-3-7h-1q-1 4-5 3t-5-11z" fill="#5d83b3" stroke="#3f618c"/><path d="M9 3q-1 7 1 12M15 3q3 6 0 12" stroke="#b7cae0" fill="none"/>',
ms:'<path d="M2 1q9 7 21 10-12 3-21 12 4-11 0-22z" fill="#5d83b3" stroke="#3f618c"/><path d="M7 6q3 6 0 11M12 8q2 4 0 7" stroke="#b7cae0" fill="none"/>',
ora:'<rect x="1" y="4" width="22" height="16" rx="6" fill="#6c93c4" stroke="#3f5f87" stroke-width="2"/>',
db2:'<rect x="1" y="1" width="22" height="22" rx="2" fill="#6b97cb"/><text x="3" y="15" font-size="8" font-family="Liberation Sans" fill="#dce8f5">DB2</text>',
wms:'<circle cx="12" cy="12" r="10" fill="#6c93c4" stroke="#3f618c"/>',
ras:'<path d="M1 1h22v22h-22z" fill="#a9bdd6"/><path d="M1 1h6v6h-6zM17 1h6v6h-6zM7 7h5v5h-5zM12 10h5v5h-5zM6 15h5v5h-5z" fill="#2a3f5c"/><path d="M1 8h5v5h-5zM18 12h5v11h-5zM8 1h7v4h-7z" fill="#dce6f2"/>',
line:'<path d="M0 12h24" stroke="#de6666" stroke-width="2.500"/>',
srcw:'<circle cx="14" cy="14" r="6.500" fill="#7f9dc7" stroke="#f3f3f3" stroke-width="4" stroke-dasharray="3.200 1.800"/><path d="M3 1q3 0 3 3t-4 3q1 4 5 3l9 9" stroke="#f0f0f0" stroke-width="2.500" fill="none"/><path d="M12 12l8 8" stroke="#efcf55" stroke-width="4.500"/>',
sym:'<path d="M0 7l10-3 9 9-9 8-7-4z" fill="#83b56d"/><path d="M0 7l8-2 4 5-7 4z" fill="#5d90c8"/><path d="M1 13l10 8 4-1-6-9z" fill="#c94f63"/><path d="M8 10l8-2 4 5-7 8-5-3z" fill="#a3a894"/><path d="M16 10l7-8" stroke="#8f9580" stroke-width="3.500"/>',
trn:'<path d="M1 1h23v16h-23z" fill="#8fa8c8" stroke="#e8e8e8" stroke-width="1.500"/><path d="M8 5l4-1 3 2 6-2v6l-3 1-2 3-4-3-3-1z" fill="#cfd9e5"/><path d="M3 1v16" stroke="#f0f0f0" stroke-width="2"/><path d="M1 21h22" stroke="#f0f0f0" stroke-width="2"/><path d="M3 19.500v3" stroke="#7a9fd0" stroke-width="2"/>',
his:'<path d="M1 4h23v15h-23z" fill="#dcdfe2" stroke="#f3f3f3" stroke-width="1.500"/><path d="M4 4v15" stroke="#999" stroke-width="1"/><path d="M5 9l3 2 4 4 4-4 3 2 4 4" stroke="#7a8fae" stroke-width="1.400" fill="none"/>',
ren:'<path d="M13 11l8-9" stroke="#cf8c3a" stroke-width="3.500"/><path d="M2 13l7-6 7 8-6 8z" fill="#e8b968" stroke="#c58d3d"/><path d="M6 11l7 8" stroke="#c58d3d"/>',
pyr:'<path d="M1 20l3-10 8-5 8 5 3 10z" fill="#d5d5d5" stroke="#f5f5f5"/><path d="M6 11l3-2 2 2 3-2 3 3M4 15l4-1 2 3 4-3 5 2" stroke="#999" fill="none" stroke-width="1.200"/>',
meta:'<path d="M4 0h13l4 4v20h-17z" fill="#fafafa"/><path d="M6 6h9M6 9h9M6 12h9M6 15h9M6 18h12M6 21h12" stroke="#aaa"/><path d="M21 3l-6 10-1 5 4-3 6-10z" fill="#dd7a3e"/>',
leg:'<path d="M2 1h6v6h-6z" fill="#f2c12e"/><path d="M2 8h6v6h-6z" fill="#e1492b"/><path d="M2 15h6v6h-6z" fill="#3f9c56"/><path d="M9 5.500h7M9 12h10M9 19h5" stroke="#999" stroke-width="1.700"/>',
srv:'<path d="M1 4h23v15h-23z" fill="#f2f2f2"/><path d="M3 6h19v11h-19z" fill="#7fa3cf"/><path d="M6 6l6 5 6-5M12 11l-8 6h11z" fill="#f2f2f2"/><path d="M22 9l-6 7" stroke="#444" stroke-width="2"/>'
};
document.querySelectorAll('svg[data-i]').forEach(s=>s.innerHTML=I[s.dataset.i]);
const ic=(n,s)=>`<svg width="${s}" height="${s}" viewBox="0 0 24 24" fill="#000">${I[n]}</svg>`;

document.getElementById('menu').innerHTML='Project,Edit,View,Layer,Settings,Plugins,Vector,Raster,Database,Web,MMQGIS,Processing,Help'.split(',').map(t=>`<span>${t}</span>`).join('');

// Toolbars: [group width, icons]; "v" is a drop-down arrow, "-" marks a disabled tool, "+" the active one.
const bars=[
 [[210,'new open save saveas layout laymgr style'],[417,'+hand pansel zin zout -z11 zfull -zsel -zlay zlast -znext book1 book2 book3 refresh'],[599,'-ident -act v -selr v -form v desel -table -abac gear sum meas v tip text v']],
 [[172,'dsm gpk vnew feanew chip'],[256,'-lab -diag labp -lpin -leye -lmov -lrot -ledt'],[454,'ring glo1 glo2 glob'],[185,'py p1 p2 p3 bin hex'],[41,'help'],[118,'']],
 [[366,'-pens -pen -sav2 -vnew -tools v -medit -trash -cut -copy -paste -undo -redo'],[860,'-tri -v1 v -b1 -b2 -b3 -b4 -b5 -b6 -b7 -b8 -b9 -v2 -s1 -s2 -s3 -mrg -rot v']],
 [[65,'g1 g2'],[41,'gpx'],[39,'-cur'],[1081,'cpc pinm m1 m2 earth -xy ext']]];
document.getElementById('bars').innerHTML=bars.map((b,i)=>`<div class="tbar d-flex${i==2?' fade-end':''}">`+b.map(([w,s])=>`<div class="tgroup d-flex align-items-center" style="width:${w}px">`+s.split(' ').filter(Boolean).map(n=>n=='v'?'<div class="arr"><svg width="11" height="6" viewBox="0 0 11 6"><path d="M2.500 1h6.500l-3.200 4z" fill="#333"/></svg></div>':`<div class="cell d-flex align-items-center justify-content-center${n[0]=='-'?' off':''}${n[0]=='+'?' on':''}">${ic(n.replace(/^[-+]/,''),23)}</div>`).join('')+'</div>').join('')+'</div>').join('');

const tw={'>':'<path d="M5 4l3.500 3.500-3.500 3.500"/>','v':'<path d="M3 5.500l3.500 3.500 3.500-3.500"/>','':''};
const twist=k=>`<svg class="tw" width="16" height="14" viewBox="0 0 16 14" fill="none" stroke="${k=='v'?'#444':'#999'}" stroke-width="1.500">${tw[k]}</svg>`;
document.getElementById('browser').innerHTML=[['','fav','Favorites'],['>','home','Home'],['>','dir','C:\\'],['>','dir','D:\\'],['','geo','GeoPackage',1],['','feather','SpatiaLite'],['>','pg','PostGIS'],['>','ms','MSSQL'],['','ora','Oracle'],['','db2','DB2'],['>','wms','WMS/WMTS']]
 .map(([t,i,n,h])=>`<div class="trow d-flex align-items-center${h?' hl':''}">${twist(t)}<div class="tbody d-flex align-items-center" style="padding-left:2px">${ic(i,16)}<span style="margin-left:5px">${n}</span></div></div>`).join('');
const sw=c=>`<span class="sw" style="background:${c}"></span>`;
document.getElementById('layers').innerHTML=[['s','#000','0'],['s','#fff','1'],['l','','roads'],['r','v','FinalMap_',1],['s','#f7fbff','0'],['s','#142d66','1'],['r','v','landuse'],['s','#000','1'],['s','#fff','7'],['r','v','Proximity map'],['s','#000','0'],['s','#fff','11589.3'],['r','>','Slope'],['r','>','elevation']]
 .map(([k,a,n,on])=>k=='s'?`<div class="trow d-flex align-items-center" style="padding-left:37px">${sw(a)}<span style="margin-left:5px">${n}</span></div>`
 :`<div class="trow d-flex align-items-center">${twist(k=='l'?'':a)}<span class="cb" style="margin-left:2px">${on?'<svg width="10" height="9" viewBox="0 0 10 9"><path d="M1.500 4.500l2.500 2.500 5-6" fill="none" stroke="#333" stroke-width="1.300"/></svg>':''}</span><span style="margin:0 6px 0 6px">${ic(k=='l'?'line':'ras',k=='l'?15:14)}</span><span class="${on?'fw-bold':'ghost'}" style="margin-left:${k=='l'?-1:0}px">${n}</span></div>`).join('');

document.getElementById('side').innerHTML=[['info','Information'],['srcw','Source'],['sym','Symbology'],['trn','Transparency'],['his','Histogram'],['ren','Rendering'],['pyr','Pyramids'],['meta','Metadata'],['leg','Legend'],['srv','QGIS Server']]
 .map(([i,n])=>`<div class="sitem d-flex align-items-center${i=='sym'?' sel':''}">${ic(i,24)}<span>${n}</span></div>`).join('');
document.querySelectorAll('[data-spin]').forEach(s=>s.innerHTML='<svg width="14" height="14"><path d="M0 7h14" stroke="#ccc"/><path d="M4 5h6l-3-3.500zM4 9h6l-3 3.500z" fill="#333"/></svg>');

// Map canvas: pale raster extents with scattered cells of class 1.
let seed=7;const rnd=()=>(seed=(seed*16807)%2147483647)/2147483647;
const inside=(x,y,p)=>{let c=false;for(let i=0,j=p.length-1;i<p.length;j=i++)if((p[i][1]>y)!=(p[j][1]>y)&&x<(p[j][0]-p[i][0])*(y-p[i][1])/(p[j][1]-p[i][1])+p[i][0])c=!c;return c};
const zones=[
 [75,[[602,246],[661,245],[661,256],[630,258],[606,258]]],
 [34,[[632,256],[661,254],[661,271],[645,267]]],
 [40,[[606,258],[630,258],[616,280],[604,278]]],
 [110,[[590,286],[612,280],[618,290],[636,300],[620,303],[622,322],[618,336],[592,336],[588,308]]],
 [18,[[620,290],[634,296],[642,304],[630,303]]],
 [34,[[497,264],[504,268],[520,276],[514,280],[502,272]]],
 [58,[[508,278],[530,275],[537,302],[508,304]]],
 [80,[[486,303],[518,303],[518,318],[526,325],[526,336],[488,330]]],
 [34,[[464,336],[484,324],[500,328],[510,336]]],
 [24,[[556,308],[572,302],[590,308],[590,313],[562,312]]],
 [38,[[536,315],[560,312],[578,322],[574,335],[552,334]]],
 [6,[[472,290],[494,300],[482,302]]]];
let d='';
for(const [n,p] of zones){const xs=p.map(a=>a[0]),ys=p.map(a=>a[1]),x0=Math.min(...xs),x1=Math.max(...xs),y0=Math.min(...ys),y1=Math.max(...ys);
 for(let k=0,t=0;k<n&&t<5000;t++){const x=x0+rnd()*(x1-x0),y=y0+rnd()*(y1-y0);if(inside(x,y,p)){k++;d+=`M${x.toFixed(1)} ${y.toFixed(1)}l${(rnd()*3.5+.8).toFixed(1)} ${(rnd()*2-1).toFixed(1)}`}}}
document.getElementById('map').innerHTML=`<path d="M407.500 245H725V786H406.500V704.500H495.500V336H407.500z" fill="#f7fbff"/>
<path d="M608 681q-3 14 4 20t4 14l-8 10q-3 10-1 22l-12 8-18 11M608 747l8 0 16 12" fill="none" stroke="#fff" stroke-width="4.500" stroke-linejoin="round"/><path d="M630 757l12 9 18-1M620 664l2-2M606 747l-26 16" fill="none" stroke="#fff" stroke-width="3.500"/>
<path d="${d}M598 248h24M602 252h20M484 303.500h34M606 259h22M605 262h9" stroke="#1c3468" stroke-width="1.250" opacity=".88" fill="none"/>
<path d="M434 713l4-4 4 2-4 4 6 2 5-3M440 707l10-2M436 711l4 6 5-1M453 705l4 3 6 4-4 2M458 709l6 5 6-1 3 4M465 716l8 7 0-8-6-7 4-2M467 720l4 4M476 722l7 3 6 5 1 3M437 736h1M488 737l1 1M474 704l2 2" stroke="#1c3468" stroke-width="1.300" stroke-dasharray="3 1.500 2 1" fill="none"/>
<path d="M642 309h2M651 309h2M464 335h3" stroke="#1c3468"/>`;
</script>
</body>
</html>
